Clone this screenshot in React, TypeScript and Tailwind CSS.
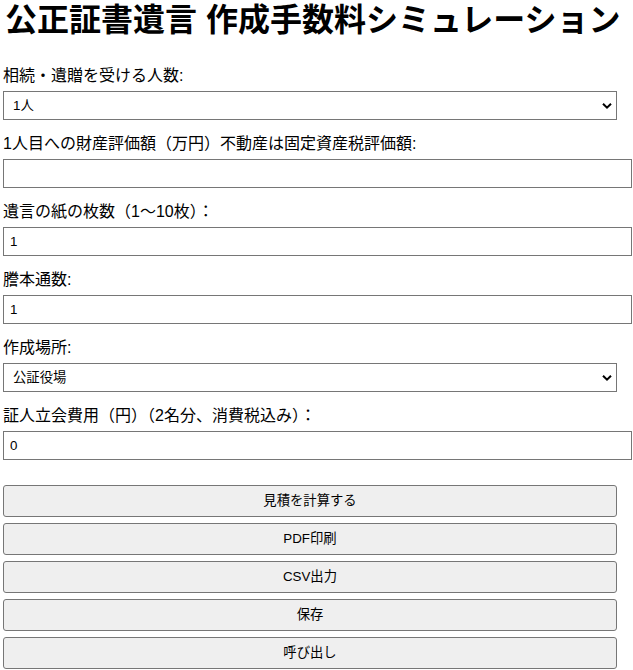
import { useState } from "react";

const font = { fontFamily: '"Liberation Sans", "Noto Sans CJK JP", sans-serif' };

function Chevron() {
  return (
    <svg
      className="pointer-events-none absolute right-[5px] top-1/2 -translate-y-1/2"
      width="10"
      height="7"
      viewBox="0 0 10 7"
    >
      <path d="M1 1.2 L5 5.2 L9 1.2" fill="none" stroke="#000" strokeWidth="2" />
    </svg>
  );
}

function SelectField({
  label,
  value,
  options,
  onChange,
}: {
  label: string;
  value: string;
  options: string[];
  onChange: (v: string) => void;
}) {
  return (
    <div className="mb-3">
      <label className="block h-6 text-base leading-6 mb-[3px]">{label}</label>
      <div className="relative w-[614px]">
        <select
          value={value}
          onChange={(e) => onChange(e.target.value)}
          className="block w-full h-[29px] appearance-none border border-[#767676] bg-white pl-[9px] pr-6 text-[13.333px] text-black outline-none"
        >
          {options.map((o) => (
            <option key={o}>{o}</option>
          ))}
        </select>
        <Chevron />
      </div>
    </div>
  );
}

function InputField({
  label,
  value,
  onChange,
}: {
  label: string;
  value: string;
  onChange: (v: string) => void;
}) {
  return (
    <div className="mb-3">
      <label className="block h-6 text-base leading-6 mb-[3px]">{label}</label>
      <input
        type="text"
        value={value}
        onChange={(e) => onChange(e.target.value)}
        className="block w-[629px] h-[29px] border border-[#767676] bg-white px-[6px] text-[13.333px] text-black outline-none"
      />
    </div>
  );
}

export default function App() {
  const [people, setPeople] = useState("1人");
  const [amount, setAmount] = useState("");
  const [pages, setPages] = useState("1");
  const [copies, setCopies] = useState("1");
  const [place, setPlace] = useState("公証役場");
  const [witness, setWitness] = useState("0");

  const buttons = ["見積を計算する", "PDF印刷", "CSV出力", "保存", "呼び出し"];

  return (
    <div className="min-h-screen bg-white text-black pl-[3px]" style={font}>
      <h1 className="m-0 h-10 pl-[2px] text-[32px] leading-10 font-bold mb-6">
        公正証書遺言 作成手数料シミュレーション
      </h1>

      <SelectField
        label="相続・遺贈を受ける人数:"
        value={people}
        options={["1人", "2人", "3人", "4人", "5人"]}
        onChange={setPeople}
      />
      <InputField
        label="1人目への財産評価額（万円）不動産は固定資産税評価額:"
        value={amount}
        onChange={setAmount}
      />
      <InputField label="遺言の紙の枚数（1〜10枚）：" value={pages} onChange={setPages} />
      <InputField label="謄本通数:" value={copies} onChange={setCopies} />
      <SelectField
        label="作成場所:"
        value={place}
        options={["公証役場", "出張（自宅・病院等）"]}
        onChange={setPlace}
      />
      <InputField
        label="証人立会費用（円）（2名分、消費税込み）："
        value={witness}
        onChange={setWitness}
      />

      <div className="mt-[25px] flex flex-col gap-[6px] w-[614px]">
        {buttons.map((b) => (
          <button
            key={b}
            className="h-8 w-full rounded-[3px] border border-[#767676] bg-[#efefef] text-[13.333px] text-black hover:bg-[#e5e5e5]"
          >
            {b}
          </button>
        ))}
      </div>
    </div>
  );
}
